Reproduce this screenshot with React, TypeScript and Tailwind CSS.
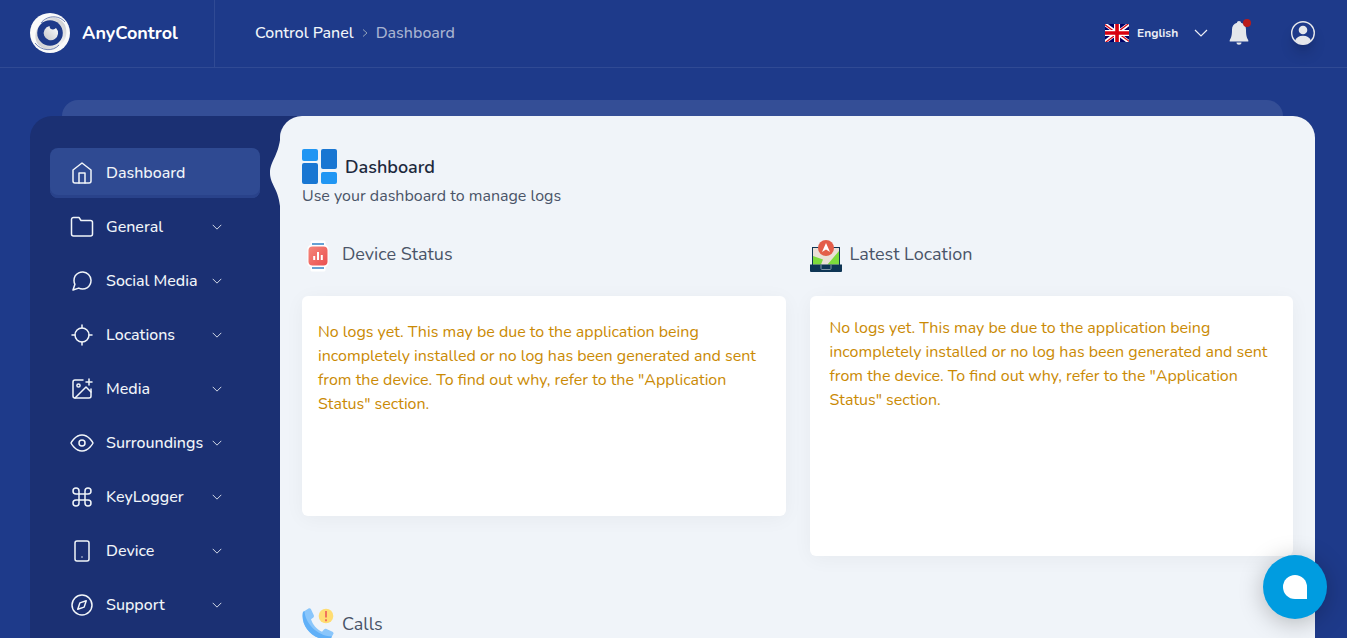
import type { ReactNode } from "react";

type MenuItem = { label: string; icon: ReactNode; active?: boolean };

const menu: MenuItem[] = [
  {
    label: "Dashboard",
    active: true,
    icon: (
      <>
        <path d="m3 9 9-7 9 7v11a2 2 0 0 1-2 2H5a2 2 0 0 1-2-2z" />
        <path d="M9 22V12h6v10" />
      </>
    ),
  },
  {
    label: "General",
    icon: <path d="M22.500 19a2 2 0 0 1-2 2H3.500a2 2 0 0 1-2-2V4.500a2 2 0 0 1 2-2H9l2 3h9.500a2 2 0 0 1 2 2z" />,
  },
  {
    label: "Social Media",
    icon: (
      <path d="M21 11.5a8.38 8.38 0 0 1-.9 3.8 8.5 8.5 0 0 1-7.6 4.7 8.38 8.38 0 0 1-3.8-.9L3 21l1.9-5.7a8.38 8.38 0 0 1-.9-3.8 8.5 8.5 0 0 1 4.7-7.6 8.38 8.38 0 0 1 3.8-.9h.5a8.48 8.48 0 0 1 8 8v.5z" />
    ),
  },
  {
    label: "Locations",
    icon: (
      <>
        <circle cx="12" cy="12" r="7" />
        <path d="M2 12h3M19 12h3M12 2v3M12 19v3" />
      </>
    ),
  },
  {
    label: "Media",
    icon: (
      <>
        <path d="M21 12v7a2 2 0 0 1-2 2H5a2 2 0 0 1-2-2V5a2 2 0 0 1 2-2h8" />
        <path d="M16 5h6M19 2v6" />
        <circle cx="8.5" cy="8.5" r="1.6" />
        <path d="m21 15-5-5L5 21" />
      </>
    ),
  },
  {
    label: "Surroundings",
    icon: (
      <>
        <path d="M1 12s4-8 11-8 11 8 11 8-4 8-11 8-11-8-11-8z" />
        <circle cx="12" cy="12" r="3" />
      </>
    ),
  },
  {
    label: "KeyLogger",
    icon: (
      <path d="M18 3a3 3 0 0 0-3 3v12a3 3 0 1 0 3-3H6a3 3 0 1 0 3 3V6a3 3 0 1 0-3 3h12a3 3 0 0 0 0-6z" />
    ),
  },
  {
    label: "Device",
    icon: (
      <>
        <rect x="5" y="2" width="14" height="20" rx="2" />
        <path d="M12 18h.01" />
      </>
    ),
  },
  {
    label: "Support",
    icon: (
      <>
        <circle cx="12" cy="12" r="10" />
        <path d="m16.24 7.76-2.12 6.36-6.36 2.12 2.12-6.36z" />
      </>
    ),
  },
];

const emptyText =
  'No logs yet. This may be due to the application being incompletely installed or no log has been generated and sent from the device. To find out why, refer to the "Application Status" section.';

function Logo() {
  return (
    <svg className="size-10 shrink-0" viewBox="0 0 40 40" aria-hidden="true">
      <defs>
        <linearGradient id="inner" x1="1" y1="0" x2="0" y2="1">
          <stop offset="0" stopColor="#c6c7ca" />
          <stop offset="0.5" stopColor="#f1f1f2" />
          <stop offset="1" stopColor="#c4c5c9" />
        </linearGradient>
        <linearGradient id="pupil" x1="1" y1="0" x2="0" y2="1">
          <stop offset="0" stopColor="#fff" />
          <stop offset="1" stopColor="#c4c5c9" />
        </linearGradient>
      </defs>
      <circle cx="20" cy="20" r="20" fill="#fafafa" />
      <path d="M12 10C18 2 30 3 35 12C38 20 36 28 30 32C24 38 13 38 7 30C4 24 5 15 12 10z" fill="url(#inner)" />
      <circle cx="20" cy="20" r="12.800" fill="#1e3a8a" />
      <path
        d="M11 10C16 3 28 1 35 9M5 30C11 38 23 39 29 32"
        fill="none"
        stroke="#1e3a8a"
        strokeWidth="0.6"
      />
      <path d="M19.500 13c0 2.500 1.500 3.500 3.500 3.500 1.500 0 2-.8 3-1.500a7.200 7.200 0 1 1-6.500-2z" fill="url(#pupil)" />
    </svg>
  );
}

function Chevron({ className }: { className: string }) {
  return (
    <svg className={className} viewBox="0 0 14 8" fill="none" stroke="currentColor" strokeWidth="1.2" aria-hidden="true">
      <path d="m1 1 6 6 6-6" />
    </svg>
  );
}

function Flag() {
  return (
    <svg className="h-[18px] w-6" viewBox="0 0 640 480" aria-hidden="true">
      <path fill="#006" d="M0 0h640v480H0z" />
      <path fill="#fff" d="m75 0 244 181L562 0h78v62L400 241l240 178v61h-80L320 301 81 480H0v-60l239-178L0 64V0z" />
      <path
        fill="#d8000f"
        d="m424 281 216 159v40L369 281zm-184 20 6 35L54 480H0zM640 0v3L391 191l2-44L590 0zM0 0l239 176h-60L0 42z"
      />
      <path fill="#fff" d="M241 0v480h160V0zM0 160v160h640V160z" />
      <path fill="#d8000f" d="M0 193v96h640v-96zM273 0v480h96V0z" />
    </svg>
  );
}

function Header() {
  return (
    <header className="flex h-[68px] shrink-0 items-stretch border-b border-[#304a94] pr-8">
      <a href="#home" className="flex w-[215px] items-center gap-3 border-r border-[#304a94] pb-px pl-[30px]">
        <Logo />
        <span className="text-lg font-bold text-white">AnyControl</span>
      </a>
      <nav aria-label="Breadcrumb" className="flex items-center gap-2 pb-px pl-10 text-base">
        <a href="#panel" className="font-medium text-slate-100">Control Panel</a>
        <svg className="h-2 w-[6px] text-slate-400" viewBox="0 0 6 8" fill="none" stroke="currentColor" aria-hidden="true">
          <path d="m1 0.5 4 3.5-4 3.5" />
        </svg>
        <a href="#dashboard" className="font-medium text-[#a8b3d1]">Dashboard</a>
      </nav>
      <div className="ml-auto flex items-center pb-px">
        <button type="button" className="flex items-center text-[#eceef5]">
          <Flag />
          <span className="ml-2 w-[57px] text-left text-xs font-bold">English</span>
          <Chevron className="h-2 w-[14px]" />
        </button>
        <button type="button" aria-label="Notifications" className="relative ml-[21px] text-gray-200">
          <svg className="h-6 w-5" viewBox="0 0 20 24" fill="currentColor" aria-hidden="true">
            <path d="M10 0c1.200 0 2 .8 2 1.800C15.300 2.700 17 5.500 17 8.500c0 5 .4 7.500 2.300 10.700V20.500H.7v-1.300C2.600 16 3 13.500 3 8.500c0-3 1.700-5.800 5-6.700C8 .8 8.800 0 10 0zM7.500 21.500h5c0 1.300-1 2.300-2.500 2.300s-2.500-1-2.500-2.300z" />
          </svg>
          <span className="absolute -top-[2px] -right-[2px] size-2 rounded-full bg-[#b91c1c]" />
        </button>
        <button type="button" aria-label="Account" className="ml-[42px] rounded-full text-gray-200 shadow-lg shadow-black/20">
          <svg className="size-6" viewBox="0 0 24 24" aria-hidden="true">
            <circle cx="12" cy="12" r="11.300" fill="none" stroke="currentColor" strokeWidth="1.400" />
            <circle cx="12" cy="9" r="4.300" fill="currentColor" />
            <path fill="currentColor" d="M4 19.500c1.500-3 4-4.700 8-4.700s6.500 1.700 8 4.700C18 22 15 23.300 12 23.300S6 22 4 19.500z" />
          </svg>
        </button>
      </div>
    </header>
  );
}

function Sidebar() {
  return (
    <nav aria-label="Main menu" className="w-[250px] shrink-0 px-5 pt-8">
      <ul className="flex flex-col gap-1">
        {menu.map((item) => (
          <li key={item.label}>
            <a
              href="#menu"
              className={
                item.active
                  ? "flex h-[50px] items-center rounded-lg bg-[#2f4a92] pr-[38px] pl-5 text-slate-100 shadow-[inset_0_-3px_0_#29428a]"
                  : "flex h-[50px] items-center rounded-lg pr-[38px] pl-5 text-slate-100"
              }
            >
              <svg
                className="size-6 shrink-0"
                viewBox="0 0 24 24"
                fill="none"
                stroke="currentColor"
                strokeWidth="1.500"
                strokeLinecap="round"
                strokeLinejoin="round"
                aria-hidden="true"
              >
                {item.icon}
              </svg>
              <span className="ml-3 text-base font-medium whitespace-nowrap">{item.label}</span>
              {!item.active && <Chevron className="ml-auto h-[6px] w-[10px] shrink-0" />}
            </a>
          </li>
        ))}
      </ul>
    </nav>
  );
}

function DashboardIcon() {
  return (
    <svg className="size-[35px]" viewBox="0 0 35 35" aria-hidden="true">
      <rect width="16" height="12" rx="2" fill="#2196f3" />
      <rect y="14" width="16" height="21" rx="2" fill="#1976d2" />
      <rect x="19" width="16" height="20" rx="2" fill="#1976d2" />
      <rect x="19" y="23" width="16" height="12" rx="2" fill="#2196f3" />
    </svg>
  );
}

function WatchIcon() {
  return (
    <svg className="size-8" viewBox="0 0 32 32" aria-hidden="true">
      <defs>
        <linearGradient id="watch" x1="0" y1="0" x2="1" y2="1">
          <stop offset="0" stopColor="#f5877b" />
          <stop offset="1" stopColor="#ea4f50" />
        </linearGradient>
      </defs>
      <path fill="#fff" d="M10 2h12v3l3 3v16l-3 3v3H10v-3l-3-3V8l3-3z" stroke="#fff" strokeWidth="3" strokeLinejoin="round" />
      <path fill="#67a2d4" d="M10 3h12v2H10zM10 27h12v2H10z" />
      <rect x="6.500" y="6.500" width="19" height="19" rx="4" fill="url(#watch)" />
      <path d="M12.200 16v4M16 12v8M19.800 15v5" stroke="#fff" strokeWidth="2" />
    </svg>
  );
}

function LocationIcon() {
  return (
    <svg className="size-8" viewBox="0 0 32 32" aria-hidden="true">
      <rect x="2.500" y="7.500" width="27" height="18" fill="#eadfd7" stroke="#0e3554" />
      <path fill="#7ddb3c" d="M3 16l10 3.500L11 24.500H3zM29 11v13.500H17.500L29 11z" />
      <path fill="#0e3554" d="M0 24.500h32V31a1 1 0 0 1-1 1H1a1 1 0 0 1-1-1z" />
      <path d="M11 25v3.500a1 1 0 0 0 1 1h8a1 1 0 0 0 1-1V25" fill="none" stroke="#8195a6" />
      <circle cx="16" cy="8" r="8" fill="#e35d49" />
      <path fill="#fff" d="m16 3 4 9-4-2.500-4 2.500z" />
    </svg>
  );
}

function CallIcon() {
  return (
    <svg className="size-8" viewBox="0 0 32 32" aria-hidden="true">
      <path
        fill="#8ac6fb"
        d="M1 4 6.500.5C7.500 0 8.500.3 9 1.200l2.800 6c.4 1 .1 1.900-.7 2.500L9 11.200c1.500 5 5.500 10 11 12.500l2-2.200c.7-.7 1.600-.9 2.500-.5l6 2.700c1 .5 1.300 1.500.8 2.400L28.500 31C12 34-2 18 1 4z"
      />
      <path fill="#60b0f8" d="M1 4 2.500 3C3 14 14 28 30 28.500L28.500 31C12 34-2 18 1 4z" />
      <circle cx="24" cy="8" r="7.300" fill="#ffdd73" />
      <path d="M24 3v6.500M24 11.300v1.900" stroke="#f0675b" strokeWidth="1.800" />
    </svg>
  );
}

function SectionTitle({ icon, children }: { icon: ReactNode; children: ReactNode }) {
  return (
    <div className="flex h-8 gap-2">
      {icon}
      <h2 className="text-lg text-[#4a5468]">{children}</h2>
    </div>
  );
}

export default function App() {
  return (
    <div className="flex h-screen flex-col overflow-hidden bg-[#1e3a8a] font-[Nunito,Lato,sans-serif]">
      <Header />
      <div className="flex min-h-0 flex-1 flex-col pt-8 pr-8 pl-[30px]">
        <div className="mx-8 h-4 shrink-0 rounded-t-[20px] bg-[#344e96]" />
        <div className="flex min-h-0 flex-1 rounded-t-[22px] bg-[#1b3073]">
          <Sidebar />
          <main className="relative min-w-0 flex-1 rounded-t-[22px] bg-[#f0f4f9]">
            <svg className="absolute top-[14px] -left-[10px] h-[76px] w-[11px]" viewBox="0 0 11 76" aria-hidden="true">
              <path fill="#f0f4f9" d="M11 0C10 26 0 30 0 43 0 54 8 58 10 76h1z" />
            </svg>
            <div className="h-full overflow-hidden px-[22px] pt-[33px]">
              <div className="flex items-center gap-2">
                <DashboardIcon />
                <h1 className="text-lg font-semibold text-slate-800">Dashboard</h1>
              </div>
              <p className="text-base text-[#4a5468]">Use your dashboard to manage logs</p>
              <div className="mt-8 grid grid-cols-2 items-start gap-6">
                <section>
                  <SectionTitle icon={<WatchIcon />}>Device Status</SectionTitle>
                  <div className="mt-6 min-h-[220px] rounded-md bg-white px-4 pt-6 pb-4 text-base leading-6 text-[#ca8a04] shadow-[0_3px_20px_#0000000b]">
                    {emptyText}
                  </div>
                </section>
                <section>
                  <SectionTitle icon={<LocationIcon />}>Latest Location</SectionTitle>
                  <div className="mt-6 min-h-[260px] rounded-md bg-white p-5 text-base leading-6 text-[#ca8a04] shadow-[0_3px_20px_#0000000b]">
                    {emptyText}
                  </div>
                </section>
              </div>
              <section className="mt-[52px] flex items-center gap-2">
                <CallIcon />
                <h2 className="text-lg text-[#4a5468]">Calls</h2>
              </section>
            </div>
          </main>
        </div>
      </div>
      <button
        type="button"
        aria-label="Open chat"
        className="fixed right-5 bottom-[19px] flex size-16 items-center justify-center rounded-full bg-[#009ce0] shadow-[0_4px_24px_#00000040]"
      >
        <span className="size-6 rounded-full rounded-br-none bg-white" />
      </button>
    </div>
  );
}
